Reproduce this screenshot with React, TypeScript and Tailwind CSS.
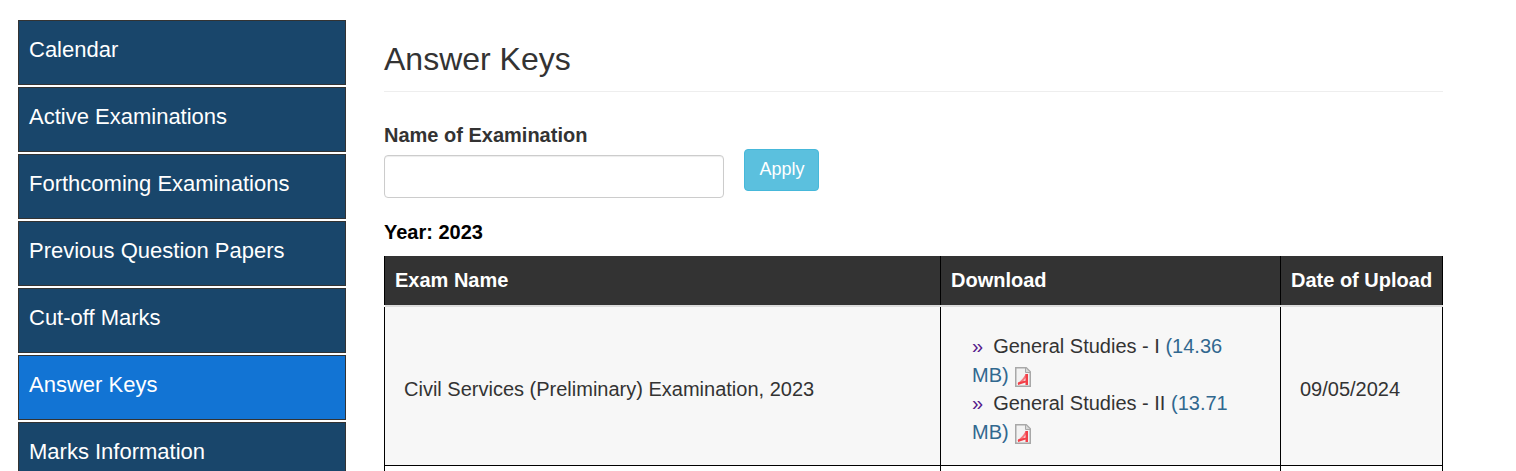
const menu = [
  "Calendar",
  "Active Examinations",
  "Forthcoming Examinations",
  "Previous Question Papers",
  "Cut-off Marks",
  "Answer Keys",
  "Marks Information",
];

function PdfIcon() {
  return (
    <svg width="16" height="20" viewBox="0 0 16 20" className="ml-px inline-block align-[-5px]">
      <path d="M.75.75h10.500l4 4v14.500H.75z" fill="#f2f2f2" stroke="#a8a8a8" strokeWidth="1.500" />
      <path d="M10.500 1v4.500H15" fill="#d8d8d8" stroke="#a8a8a8" />
      <path d="M3 17C6.500 15 9.500 11.500 11.500 7.500" fill="none" stroke="#f6787e" strokeWidth="2" />
      <path d="M10.500 7h2.500v11h-2.500zM3 15.500l7.500-2v2l-7.500 2.500z" fill="#f23f48" />
    </svg>
  );
}

function FileLink({ name, size }: { name: string; size: string }) {
  return (
    <div>
      <span className="text-[#551a8b]">»</span>
      <span className="ml-[10px]">{name}</span>{" "}
      <span className="text-[#31688f]">
        ({size} MB)
      </span>{" "}
      <PdfIcon />
    </div>
  );
}

export default function App() {
  return (
    <div className="flex h-[471px] overflow-hidden bg-white pt-5 pl-[18px] font-['Liberation_Sans',Arial,sans-serif] text-[#333]">
      <div className="flex w-[328px] shrink-0 flex-col gap-0.5">
        {menu.map((item) => (
          <div
            key={item}
            className={`h-[65px] shrink-0 border border-[#333] pt-4 pl-[10px] text-[22px] leading-[26px] text-white ${
              item === "Answer Keys" ? "bg-[#1274d4]" : "bg-[#19466b]"
            }`}
          >
            {item}
          </div>
        ))}
      </div>

      <div className="ml-[38px] w-[1059px] shrink-0">
        <div className="h-[72px] border-b border-[#eee] pt-[22px] text-[32px] leading-[35px]">Answer Keys</div>

        <div className="mt-[30px] flex items-start">
          <div className="w-[340px]">
            <div className="text-[20px] leading-[27px] font-bold">Name of Examination</div>
            <input className="mt-[6px] block h-[43px] w-full rounded border border-[#ccc] bg-white shadow-[inset_0_1px_1px_rgba(0,0,0,0.075)]" />
          </div>
          <button className="mt-[27px] ml-5 h-[42px] w-[75px] rounded border border-[#46b8da] bg-[#5bc0de] pb-0.5 pl-px text-[18px] text-white">
            Apply
          </button>
        </div>

        <div className="mt-[21px] text-[20px] leading-[27px] font-bold text-black">Year: 2023</div>

        <table className="mt-2.5 w-[1059px] table-fixed border-collapse text-[20px] leading-[28.600px]">
          <thead>
            <tr className="h-[49px] bg-[#333] text-left font-bold text-white">
              <th className="w-[556px] border-x border-black px-[10px]">Exam Name</th>
              <th className="w-[340px] border-r border-black px-[10px]">Download</th>
              <th className="border-r border-black pl-[10px] whitespace-nowrap">Date of Upload</th>
            </tr>
            <tr className="bg-[#ddd]">
              <th colSpan={3} className="h-0.5 p-0" />
            </tr>
          </thead>
          <tbody>
            <tr className="bg-[#f7f7f7]">
              <td className="border-x border-b border-black px-[19px] pt-[7px]">Civil Services (Preliminary) Examination, 2023</td>
              <td className="border-x border-b border-black px-[31px] pt-[25px] pb-[19px]">
                <FileLink name="General Studies - I" size="14.36" />
                <FileLink name="General Studies - II" size="13.71" />
              </td>
              <td className="border-x border-b border-black px-[19px] pt-[7px]">09/05/2024</td>
            </tr>
            <tr className="h-[60px] bg-white">
              <td className="border border-black" />
              <td className="border border-black" />
              <td className="border border-black" />
            </tr>
          </tbody>
        </table>
      </div>
    </div>
  );
}
